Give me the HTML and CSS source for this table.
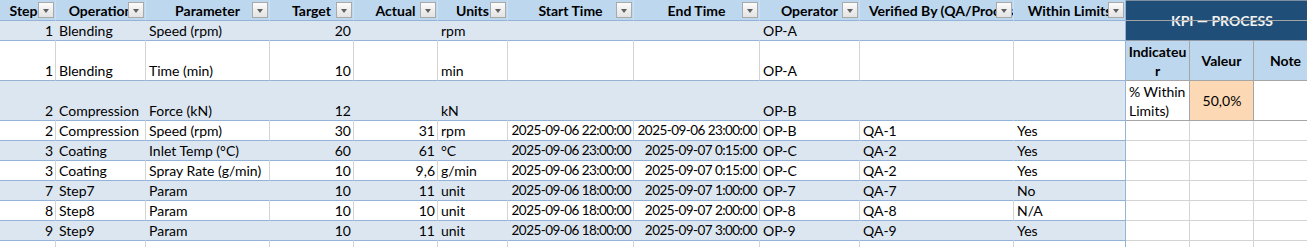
FILE: index.html
```html
<!DOCTYPE html>
<html lang="en">
<head>
<meta charset="utf-8">
<title>Process log</title>
<link rel="stylesheet" href="styles.css">
</head>
<body>
<div class="sheet">
  <!-- header row -->
  <div class="c h h-step"><span class="ht">Step</span><span class="fb"></span></div>
  <div class="c h"><span class="ht">Operation</span><span class="fb"></span></div>
  <div class="c h"><span class="ht">Parameter</span><span class="fb"></span></div>
  <div class="c h"><span class="ht">Target</span><span class="fb"></span></div>
  <div class="c h"><span class="ht">Actual</span><span class="fb"></span></div>
  <div class="c h"><span class="ht">Units</span><span class="fb"></span></div>
  <div class="c h"><span class="ht">Start Time</span><span class="fb"></span></div>
  <div class="c h"><span class="ht">End Time</span><span class="fb"></span></div>
  <div class="c h"><span class="ht">Operator</span><span class="fb"></span></div>
  <div class="c h h-left"><span class="ht">Verified By (QA/Process)</span><span class="fb"></span></div>
  <div class="c h e"><span class="ht">Within Limits</span><span class="fb"></span></div>
  <div class="kt">KPI — PROCESS</div>

  <!-- row 1 -->
  <div class="c b r">1</div><div class="c b">Blending</div><div class="c b">Speed (rpm)</div><div class="c b r">20</div><div class="c b r"></div><div class="c b">rpm</div><div class="c b"></div><div class="c b"></div><div class="c b">OP-A</div><div class="c b"></div><div class="c b e"></div>

  <!-- row 2 -->
  <div class="c r">1</div><div class="c">Blending</div><div class="c">Time (min)</div><div class="c r">10</div><div class="c r"></div><div class="c">min</div><div class="c"></div><div class="c"></div><div class="c">OP-A</div><div class="c"></div><div class="c e"></div>
  <div class="kh">Indicateu<wbr>r</div><div class="kh">Valeur</div><div class="kh">Note</div>

  <!-- row 3 -->
  <div class="c b r">2</div><div class="c b">Compression</div><div class="c b">Force (kN)</div><div class="c b r">12</div><div class="c b r"></div><div class="c b">kN</div><div class="c b"></div><div class="c b"></div><div class="c b">OP-B</div><div class="c b"></div><div class="c b e"></div>
  <div class="kd">% Within Limits)</div><div class="kd kv">50,0%</div><div class="kd"></div>

  <!-- row 4 -->
  <div class="c r">2</div><div class="c">Compression</div><div class="c">Speed (rpm)</div><div class="c r">30</div><div class="c r">31</div><div class="c">rpm</div><div class="c r dt">2025-09-06 22:00:00</div><div class="c r dt">2025-09-06 23:00:00</div><div class="c">OP-B</div><div class="c nl">QA-1</div><div class="c e">Yes</div>
  <div class="k"></div><div class="k"></div><div class="k"></div>

  <!-- row 5 -->
  <div class="c b r">3</div><div class="c b">Coating</div><div class="c b">Inlet Temp (°C)</div><div class="c b r">60</div><div class="c b r">61</div><div class="c b">°C</div><div class="c b r dt">2025-09-06 23:00:00</div><div class="c b r dt">2025-09-07 0:15:00</div><div class="c b">OP-C</div><div class="c b">QA-2</div><div class="c b e">Yes</div>
  <div class="k"></div><div class="k"></div><div class="k"></div>

  <!-- row 6 -->
  <div class="c r">3</div><div class="c">Coating</div><div class="c">Spray Rate (g/min)</div><div class="c r">10</div><div class="c r">9,6</div><div class="c">g/min</div><div class="c r dt">2025-09-06 23:00:00</div><div class="c r dt">2025-09-07 0:15:00</div><div class="c">OP-C</div><div class="c nl">QA-2</div><div class="c e">Yes</div>
  <div class="k"></div><div class="k"></div><div class="k"></div>

  <!-- row 7 -->
  <div class="c b r">7</div><div class="c b">Step7</div><div class="c b">Param</div><div class="c b r">10</div><div class="c b r">11</div><div class="c b">unit</div><div class="c b r dt">2025-09-06 18:00:00</div><div class="c b r dt">2025-09-07 1:00:00</div><div class="c b">OP-7</div><div class="c b">QA-7</div><div class="c b e">No</div>
  <div class="k"></div><div class="k"></div><div class="k"></div>

  <!-- row 8 -->
  <div class="c r">8</div><div class="c">Step8</div><div class="c">Param</div><div class="c r">10</div><div class="c r">10</div><div class="c">unit</div><div class="c r dt">2025-09-06 18:00:00</div><div class="c r dt">2025-09-07 2:00:00</div><div class="c">OP-8</div><div class="c">QA-8</div><div class="c e">N/A</div>
  <div class="k"></div><div class="k"></div><div class="k"></div>

  <!-- row 9 -->
  <div class="c b r">9</div><div class="c b">Step9</div><div class="c b">Param</div><div class="c b r">10</div><div class="c b r">11</div><div class="c b">unit</div><div class="c b r dt">2025-09-06 18:00:00</div><div class="c b r dt">2025-09-07 3:00:00</div><div class="c b">OP-9</div><div class="c b">QA-9</div><div class="c b e">Yes</div>
  <div class="k"></div><div class="k"></div><div class="k"></div>

  <!-- row 10 (empty sheet row) -->
  <div class="g"></div><div class="g"></div><div class="g"></div><div class="g"></div><div class="g"></div><div class="g"></div><div class="g"></div><div class="g"></div><div class="g"></div><div class="g"></div><div class="g ge"></div><div class="g"></div><div class="g"></div><div class="g"></div>
</div>
</body>
</html>
```
FILE: styles.css
```css
html, body {
  margin: 0;
  padding: 0;
  background: #ffffff;
  overflow: hidden;
}

body {
  font-family: Lato, "Liberation Sans", sans-serif;
  font-size: 14px;
  color: #000000;
  width: 1307px;
  height: 247px;
}

.sheet {
  display: grid;
  grid-template-columns: 56px 90px 124px 84px 84px 70px 126px 126px 100px 154px 112px 64px 64px 64px;
  grid-template-rows: 21px 20px 40px 40px repeat(6, 20px) 6px;
  width: 1318px;
}

.c {
  box-sizing: border-box;
  display: flex;
  align-items: flex-end;
  padding: 0 2px 0 3px;
  line-height: 19px;
  white-space: nowrap;
  overflow: hidden;
  border-right: 1px solid #d4d4d4;
  border-bottom: 1px solid #95b3d7;
}

.r { justify-content: flex-end; }

.dt {
  font-size: 13.5px;
  letter-spacing: -0.55px;
}

.b {
  background: #dce6f1;
  border-right-color: transparent;
}

.nl { border-right-color: transparent; }

.e { border-right-color: #95b3d7; }

/* header */
.h {
  position: relative;
  background: #bdd7ee;
  font-weight: bold;
  justify-content: center;
  padding: 0;
  border-right-color: #cadff2;
}
.h.e { border-right-color: #95b3d7; }
.h-step { padding-right: 8px; }
.h-left { justify-content: flex-start; padding-left: 9px; }

.ht { white-space: nowrap; }

.fb {
  position: absolute;
  right: 1px;
  top: 2px;
  width: 16px;
  height: 16px;
  box-sizing: border-box;
  border: 1px solid #a9a9a9;
  background: linear-gradient(#fbfbfb, #e3e3e3);
}
.fb::after {
  content: "";
  position: absolute;
  left: 4px;
  top: 6px;
  border-left: 3.5px solid transparent;
  border-right: 3.5px solid transparent;
  border-top: 4px solid #5f5f5f;
}

/* KPI block */
.kt {
  grid-column: span 3;
  grid-row: span 2;
  position: relative;
  box-sizing: border-box;
  background: #1f4e78;
  color: #f2f2f2;
  font-weight: bold;
  display: flex;
  align-items: center;
  justify-content: center;
  border-bottom: 1px solid #8f9aa6;
  box-shadow: inset 0 1px 0 #7d8ea0;
  padding-top: 1px;
}
.kt::after {
  content: "";
  position: absolute;
  left: 0;
  right: 0;
  top: 20px;
  height: 1px;
  background: #a3a3a3;
}

.kh, .kd {
  box-sizing: border-box;
  display: flex;
  align-items: center;
  line-height: 19px;
  border-right: 1px solid #a6a6a6;
  border-bottom: 1px solid #a6a6a6;
}

.kh {
  background: #bdd7ee;
  font-weight: bold;
  justify-content: center;
  text-align: center;
  padding: 0 2px;
}

.kd {
  background: #ffffff;
  padding: 0 2px 0 3px;
}

.kv {
  background: #fcd9b4;
  justify-content: center;
}

.k {
  box-sizing: border-box;
  border-right: 1px solid #d4d4d4;
  border-bottom: 1px solid #d4d4d4;
}

.g {
  box-sizing: border-box;
  border-right: 1px solid #d4d4d4;
}
.ge { border-right-color: #95b3d7; }
```
